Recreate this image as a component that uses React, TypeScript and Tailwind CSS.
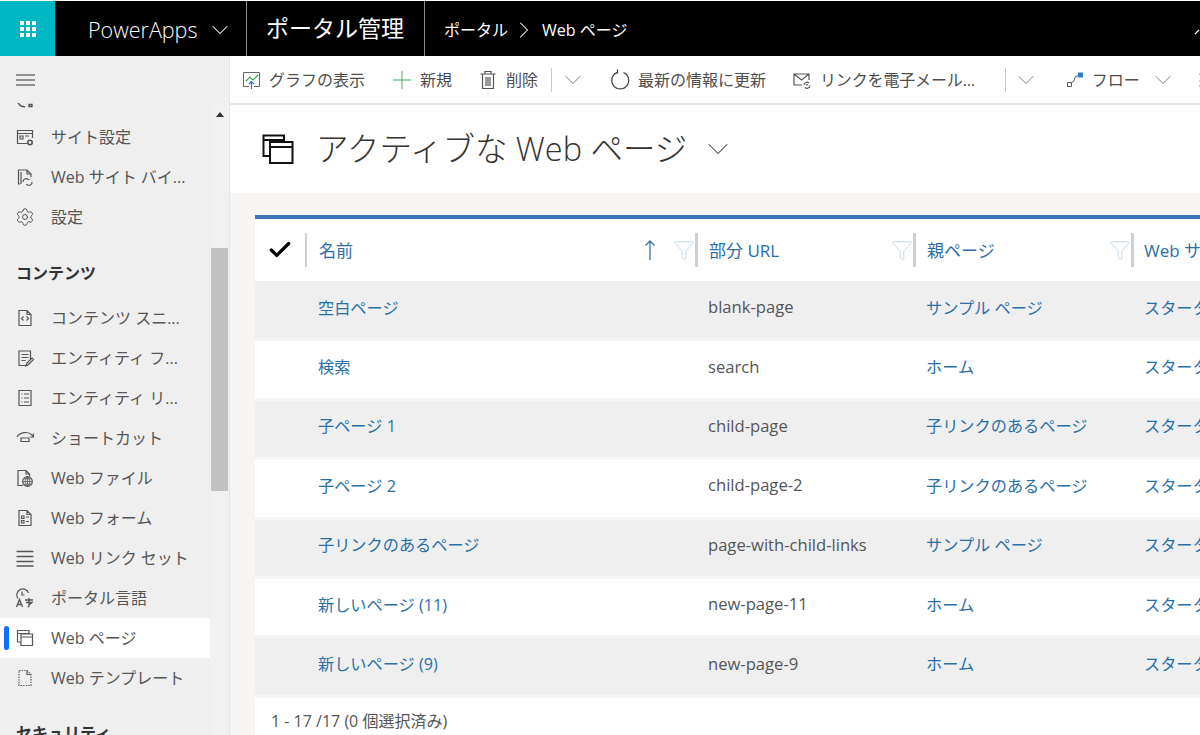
import React from "react";
import { ChevronDown, ChevronRight, Plus, Filter, Check, Settings } from "lucide-react";

const FONT = "font-['Open_Sans','Noto_Sans_CJK_JP',sans-serif]";

const S = ({ children, size = 20 }: { children: React.ReactNode; size?: number }) => (
  <svg width={size} height={size} viewBox="0 0 20 20" fill="none" stroke="#555" strokeWidth="1.200" className="shrink-0">
    {children}
  </svg>
);

const icons: Record<string, React.ReactNode> = {
  site: (
    <S>
      <path d="M12 16.500H2.500v-13h15V11M2.500 6.500h15M5 9h3v3H5zM10 9h4" />
      <circle cx="15" cy="15.500" r="2.200" strokeWidth="1.600" />
    </S>
  ),
  binding: (
    <S>
      <path d="M5 17H3.500V3H12l4 4v3M12 3v4h4M6 5v12" />
      <path d="M8 15a3 3 0 0 1 5-2.500M17 15a3 3 0 0 1-5 2.600M13 12.500h1.500M11 17.500H12" />
    </S>
  ),
  gear: <Settings size={20} strokeWidth={1.200} className="shrink-0 text-[#555]" />,
  snippet: (
    <S>
      <path d="M4 2.500h8l4 4v11H4zM12 2.500v4h4M8.500 8.500 6.500 10.500l2 2M11.500 8.500l2 2-2 2" />
    </S>
  ),
  form: (
    <S>
      <path d="M13 17.500H4V3h11.500v8M6.500 6.500h7M6.500 9.500h7M6.500 12.500h4M11 18l1-3 5-5 1.500 1.500-5 5z" />
    </S>
  ),
  list: (
    <S>
      <path d="M4 2.500h12v15H4zM6.500 6h1M9 6h5M6.500 10h1M9 10h5M6.500 14h1M9 14h5" />
    </S>
  ),
  shortcut: (
    <S>
      <path d="M2 9c3-5 11-6 15-2l1 1.500M18.500 5.500v3.500H15M6 10h8v3.500H6z" />
    </S>
  ),
  file: (
    <S>
      <path d="M8 17.500H3V2.500h8l3.500 3.500v2.500M11 2.500V6h3.500" />
      <circle cx="12.500" cy="13.500" r="4.800" />
      <path d="M7.700 13.500h9.600M12.500 8.700v9.600M9 10.800h7M9 16.200h7M12.500 8.700c-3 3-3 6.600 0 9.600M12.500 8.700c3 3 3 6.600 0 9.600" strokeWidth=".8" />
    </S>
  ),
  webform: (
    <S>
      <path d="M4 2.500h8l4 4v11H4zM12 2.500v4h4M6.500 8h2.500v2.500H6.500zM11 9h3M6.500 12.500H9V15H6.500zM11 13.500h3" />
    </S>
  ),
  links: (
    <S>
      <path d="M1.500 3.500h17M1.500 8.500h17M1.500 13.500h17M1.500 18h17" strokeWidth="1.300" />
    </S>
  ),
  lang: (
    <S>
      <path d="M3 10.500A6 6 0 1 1 13.500 5M7 3.500V7h2.500" />
      <path d="M1.500 19 4.500 11.500 7.500 19M2.500 16.500h4M10 12h8M14 10v8.500l-1.500.5M11 14.500h6l-3 2.500" strokeWidth="1.300" />
    </S>
  ),
  pages: (
    <S>
      <path d="M6 14H2.500V2.500H14V6M2.500 5.500H14M6 6h11.500v11.500H6zM6 9h11.500" />
    </S>
  ),
  template: (
    <S>
      <path d="M4 2.500h8l4 4v11H4z" strokeDasharray="1.400 1.200" />
      <path d="M12 2.500v4h4" />
    </S>
  ),
};

const NavItem = ({ icon, label, active }: { icon: string; label: string; active?: boolean }) => (
  <div className={`relative flex h-10 items-center gap-[16px] pl-[15px] text-[16px] text-[#555] ${active ? "bg-white" : ""}`}>
    {active && <span className="absolute left-[4px] top-[8px] h-[24px] w-[5px] rounded-sm bg-[#0f6fff]" />}
    {icons[icon]}
    <span className="whitespace-nowrap">{label}</span>
  </div>
);

const ToolBtn = ({ children, className = "" }: { children: React.ReactNode; className?: string }) => (
  <div className={`flex shrink-0 items-center whitespace-nowrap text-[16px] text-[#4d4d4d] ${className}`}>{children}</div>
);

const Chev = ({ className = "" }: { className?: string }) => (
  <ChevronDown size={28} strokeWidth={0.800} className={`shrink-0 text-[#777] ${className}`} />
);

const Head = ({ label, w, sort, first }: { label: string; w: string; sort?: boolean; first?: boolean }) => (
  <div className={`flex h-[34px] shrink-0 items-center border-r-[3px] border-[#cfcfcf] ${w}`}>
    <span className={`flex-1 whitespace-nowrap pt-[2px] text-[17px] text-[#2b6fa8] ${first ? "ml-[12px]" : "ml-[11px]"}`}>{label}</span>
    {sort && (
      <svg width="14" height="22" viewBox="0 0 14 22" fill="none" stroke="#3b6f9e" strokeWidth="1.300" className="mr-[16px] shrink-0">
        <path d="M7 21V2M2.500 6.500 7 2l4.500 4.500" />
      </svg>
    )}
    <Filter size={22} strokeWidth={0.900} className="shrink-0 text-[#b7d0e6]" />
  </div>
);

const rows = [
  ["空白ページ", "blank-page", "サンプル ページ"],
  ["検索", "search", "ホーム"],
  ["子ページ 1", "child-page", "子リンクのあるページ"],
  ["子ページ 2", "child-page-2", "子リンクのあるページ"],
  ["子リンクのあるページ", "page-with-child-links", "サンプル ページ"],
  ["新しいページ (11)", "new-page-11", "ホーム"],
  ["新しいページ (9)", "new-page-9", "ホーム"],
];

export default function App() {
  return (
    <div className={`flex h-[735px] w-[1200px] flex-col overflow-hidden bg-white ${FONT}`}>
      <header className="mt-px flex h-[55px] shrink-0 items-stretch bg-black text-white">
        <div className="flex w-[55px] items-center justify-center bg-[#00b7c3]">
          <div className="grid grid-cols-3 gap-[2px]">
            {Array.from({ length: 9 }).map((_, i) => (
              <span key={i} className="h-[4px] w-[4px] bg-white" />
            ))}
          </div>
        </div>
        <div className="flex w-[192px] items-center border-r border-[#8a8a8a] pl-[33px] pt-[3px] text-[21.500px] font-light">
          PowerApps
          <ChevronDown size={28} strokeWidth={0.900} className="ml-[9px] shrink-0" />
        </div>
        <div className="flex w-[178px] items-center border-r border-[#8a8a8a] pl-[19px] text-[23px]">ポータル管理</div>
        <div className="flex flex-1 items-center pl-[19px] pt-[3px] text-[16px]">
          ポータル
          <ChevronRight size={28} strokeWidth={0.900} className="ml-[2px] mr-[4px] shrink-0" />
          Web ページ
          <svg width="6" height="6" viewBox="0 0 6 6" fill="none" stroke="#fff" strokeWidth="1.200" className="ml-auto mt-[4px] shrink-0">
            <path d="M1 5 5 1" />
          </svg>
        </div>
      </header>

      <div className="flex min-h-0 flex-1">
        <aside className="flex w-[230px] shrink-0 flex-col border-r border-[#e6e6e6] bg-[#efefef]">
          <div className="flex h-[47px] shrink-0 items-center pl-[16px]">
            <svg width="19" height="14" viewBox="0 0 19 14" fill="none" stroke="#333" strokeWidth="1.200">
              <path d="M0 2h19M0 7h19M0 12h19" />
            </svg>
          </div>
          <div className="flex min-h-0 flex-1">
            <nav className="w-[210px] shrink-0 overflow-hidden">
              <div className="h-[14px] overflow-hidden pl-[17px]">
                <svg width="18" height="5" viewBox="0 0 18 5" fill="none" stroke="#555" strokeWidth="1.400">
                  <path d="M1 0l3 3 4 1M12 1.500h3v2h-3z" />
                </svg>
              </div>
              <NavItem icon="site" label="サイト設定" />
              <NavItem icon="binding" label="Web サイト バイ..." />
              <NavItem icon="gear" label="設定" />
              <div className="flex h-[56px] items-end pb-[8px] pl-[16px] text-[16px] font-bold text-[#333]">コンテンツ</div>
              <div className="h-[5px]" />
              <NavItem icon="snippet" label="コンテンツ スニ..." />
              <NavItem icon="form" label="エンティティ フ..." />
              <NavItem icon="list" label="エンティティ リ..." />
              <NavItem icon="shortcut" label="ショートカット" />
              <NavItem icon="file" label="Web ファイル" />
              <NavItem icon="webform" label="Web フォーム" />
              <NavItem icon="links" label="Web リンク セット" />
              <NavItem icon="lang" label="ポータル言語" />
              <NavItem icon="pages" label="Web ページ" active />
              <NavItem icon="template" label="Web テンプレート" />
              <div className="flex h-[47px] items-end pl-[16px] text-[16px] font-bold text-[#333]">セキュリティ</div>
            </nav>
            <div className="flex w-[19px] shrink-0 flex-col items-center bg-[#f1f1f1] px-px">
              <div className="mt-[9px] h-0 w-0 border-x-[4px] border-b-[5px] border-x-transparent border-b-[#333]" />
              <div className="mt-[131px] h-[243px] w-full bg-[#c1c1c1]" />
            </div>
          </div>
        </aside>

        <main className="flex min-w-0 flex-1 flex-col">
          <div className="flex h-[49px] shrink-0 items-center overflow-hidden border-b-2 border-[#e6e6e6] pl-[12px]">
            <ToolBtn className="w-[135px] gap-[7px]">
              <svg width="20" height="20" viewBox="0 0 20 20" fill="none" className="shrink-0">
                <path d="M12 16.500h5.500v-14h-16v14H7" stroke="#666" />
                <path d="M4 11l4-4 3 3 5-5" stroke="#3aa655" strokeWidth="1.200" />
                <path d="M9.500 19v-7M7 14l2.500-2.500L12 14" stroke="#2e7cc4" strokeWidth="1.200" />
              </svg>
              グラフの表示
            </ToolBtn>
            <ToolBtn className="w-[94px] gap-[3px] pl-[10px]">
              <Plus size={30} strokeWidth={0.800} className="shrink-0 text-[#3fae63]" />
              新規
            </ToolBtn>
            <ToolBtn className="w-[80px] gap-[8px] pl-[7px]">
              <svg width="20" height="20" viewBox="0 0 20 20" fill="none" stroke="#555" strokeWidth="1.200" className="shrink-0">
                <path d="M2.500 4h15M7 4V1.500h6V4M4.500 4v14.500h11V4M8 7v9M10 7v9M12 7v9" />
              </svg>
              削除
            </ToolBtn>
            <div className="h-[24px] w-px shrink-0 bg-[#c8c8c8]" />
            <Chev className="ml-[7px]" />
            <ToolBtn className="ml-[23px] gap-[6px]">
              <svg width="22" height="22" viewBox="0 0 22 22" fill="none" stroke="#444" strokeWidth="1.200" className="shrink-0">
                <path d="M13.500 3.500A8.500 8.500 0 1 1 7 3.500M7.500 0.500 7.500 4 4 4.500" />
              </svg>
              最新の情報に更新
            </ToolBtn>
            <ToolBtn className="ml-[26px] gap-[8px]">
              <svg width="20" height="20" viewBox="0 0 20 20" fill="none" stroke="#555" strokeWidth="1.200" className="shrink-0">
                <path d="M10 15H2V4h15v6M2 4l7.500 6L17 4" />
                <path d="M12 15a3 3 0 0 1 5-2M18 15.500a3 3 0 0 1-5 2M14 15a1.500 1.500 0 0 1 2 0" />
              </svg>
              <span className="tracking-[-0.150px]">リンクを電子メール...</span>
            </ToolBtn>
            <div className="ml-[30px] h-[24px] w-px shrink-0 bg-[#c8c8c8]" />
            <Chev className="ml-[6px]" />
            <ToolBtn className="ml-[25px] gap-[7px]">
              <svg width="20" height="20" viewBox="0 0 20 20" fill="none" className="shrink-0">
                <path d="M2.500 12.500h4v4h-4z" stroke="#555" />
                <path d="M6.500 12.500l2-1 2-5 3-1" stroke="#555" />
                <rect x="13" y="2.500" width="5" height="5" fill="#2e7cc4" />
              </svg>
              フロー
            </ToolBtn>
            <Chev className="ml-[9px]" />
            <svg width="4" height="16" viewBox="0 0 4 16" fill="none" stroke="#b8895a" className="ml-[21px] shrink-0">
              <path d="M1 2h3M1 9h3M1 14h3" />
            </svg>
          </div>

          <div className="flex h-[88px] shrink-0 items-center pl-[32px]">
            <svg width="32" height="32" viewBox="0 0 32 32" fill="none" stroke="#111" strokeWidth="2" className="shrink-0">
              <path d="M8 23H1.500V2.500H22V9M1.500 7H22M8 9h22.500v21H8zM8 14h22.500" />
            </svg>
            <h1 className="ml-[22px] whitespace-nowrap text-[32.500px] font-light text-[#333]">アクティブな Web ページ</h1>
            <ChevronDown size={36} strokeWidth={0.700} className="ml-[13px] shrink-0 text-[#444]" />
          </div>

          <div className="min-h-0 flex-1 bg-[#f6f5f4] pl-[25px] pt-[22px]">
            <div className="w-[945px] overflow-hidden border-t-4 border-[#3b79bb] bg-white text-[16px]">
              <div className="flex h-[63px] items-center border-b border-[#f0f0f0]">
                <div className="flex h-[34px] w-[52px] shrink-0 items-center justify-center border-r-2 border-[#cfcfcf]">
                  <Check size={26} strokeWidth={3} className="text-black" />
                </div>
                <Head label="名前" w="w-[391px]" sort first />
                <Head label="部分 URL" w="w-[218px]" />
                <Head label="親ページ" w="w-[218px]" />
                <span className="ml-[10px] whitespace-nowrap pt-[2px] text-[17px] text-[#2b6fa8]">Web サイト</span>
              </div>
              {rows.map((r, i) => (
                <div
                  key={r[1]}
                  className={`flex h-[59.400px] items-center border-b-[3px] border-[#f5f5f5] pb-[5px] ${i % 2 === 0 ? "bg-[#efefef]" : "bg-white"}`}
                >
                  <span className="w-[453px] shrink-0 whitespace-nowrap pl-[63px] text-[16.200px] text-[#2b6fa8]">{r[0]}</span>
                  <span className="w-[218px] shrink-0 whitespace-nowrap text-[16.600px] text-[#555]">{r[1]}</span>
                  <span className="w-[218px] shrink-0 whitespace-nowrap text-[16.200px] text-[#2b6fa8]">{r[2]}</span>
                  <span className="whitespace-nowrap text-[16.200px] text-[#2b6fa8]">スターター ポータル</span>
                </div>
              ))}
              <div className="flex h-[46px] items-center pl-[16px] text-[#555]">1 - 17 /17 (0 個選択済み)</div>
            </div>
          </div>
        </main>
      </div>
    </div>
  );
}
